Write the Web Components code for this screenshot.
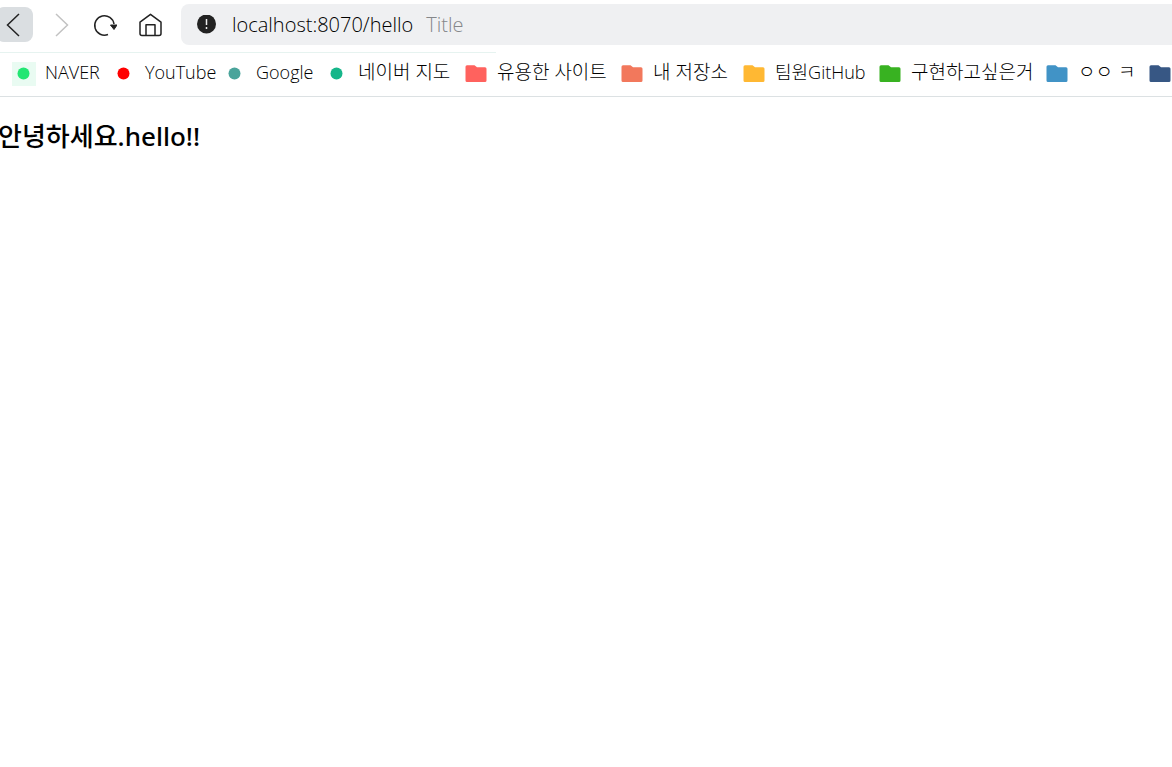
<!DOCTYPE html>
<html lang="ko">
<head>
<meta charset="utf-8">
<title>Title</title>
<style>
body { margin: 0; background: #fff; color: #000; font-family: "Open Sans", "Noto Sans CJK KR", sans-serif; }
</style>
</head>
<body>
<browser-toolbar></browser-toolbar>
<bookmarks-bar>
  <bookmark-link kind="site" tint="#23e673" class="tile">NAVER</bookmark-link>
  <bookmark-link kind="site" tint="#ff0000">YouTube</bookmark-link>
  <bookmark-link kind="site" tint="#4aa49b">Google</bookmark-link>
  <bookmark-link kind="site" tint="#16b68a" class="hangul">네이버 지도</bookmark-link>
  <bookmark-link kind="folder" tint="#ff625e" class="hangul">유용한 사이트</bookmark-link>
  <bookmark-link kind="folder" tint="#f2785c" class="hangul">내 저장소</bookmark-link>
  <bookmark-link kind="folder" tint="#ffb833">팀원GitHub</bookmark-link>
  <bookmark-link kind="folder" tint="#38b221" class="hangul">구현하고싶은거</bookmark-link>
  <bookmark-link kind="folder" tint="#4193c6" class="hangul">ㅇㅇ ㅋ</bookmark-link>
  <bookmark-link kind="folder" tint="#375784"></bookmark-link>
</bookmarks-bar>
<hello-page>안녕하세요.hello!!</hello-page>

<script>
class BrowserToolbar extends HTMLElement {
  constructor() {
    super();
    this.attachShadow({ mode: "open" }).innerHTML = `
      <style>
        :host { display: flex; align-items: center; box-sizing: border-box; height: 52px; padding: 4px 0 7px; overflow: hidden; }
        nav { display: flex; align-items: center; flex: none; gap: 8px; margin-left: -4px; }
        button { display: grid; place-items: center; width: 37px; height: 35px; padding: 0; border: 0; border-radius: 8px; background: none; }
        .back { background: #dadee1; }
        svg { display: block; fill: none; stroke: #222; stroke-width: 1.5; }
        form { display: flex; align-items: center; flex: 1; height: 41px; margin-left: 13px; padding-left: 15px; border-radius: 8px 0 0 8px; background: #eff0f2; font-size: 20px; font-weight: 300; }
        form svg { flex: none; margin-right: 16px; }
        input { field-sizing: content; padding: 0; border: 0; outline: 0; background: none; color: #000; font: inherit; }
        span { margin-left: 13px; color: #85878a; }
      </style>
      <nav aria-label="탐색">
        <button class="back" aria-label="뒤로"><svg width="24" height="24"><path d="M16 1 4.500 12 16 23"/></svg></button>
        <button aria-label="앞으로"><svg width="24" height="24" style="stroke:#c2c2c2"><path d="m8 1 11.500 11L8 23"/></svg></button>
        <button aria-label="새로고침"><svg width="24" height="24"><path d="M15 21.500A9.700 9.700 0 1 1 21 11"/><path d="m17.500 12 3.500 4.500 3-4.500z" fill="#222" stroke-linejoin="round" stroke-width="1"/></svg></button>
        <button aria-label="홈"><svg width="24" height="24"><path d="M2 9.200 12.500 1.300l10.500 7.900V20.500a2 2 0 0 1-2 2h-17a2 2 0 0 1-2-2zM8 22V11.700h9V22" stroke-linejoin="round"/></svg></button>
      </nav>
      <form>
        <svg width="20" height="20"><circle cx="10.500" cy="9" r="9.500" fill="#222" stroke="none"/><path d="M10.500 4v6" stroke="#eee" stroke-width="1.500"/><path d="M10.500 12v2" stroke="#eee" stroke-width="1.500"/></svg>
        <input aria-label="주소" value="localhost:8070/hello"><span>Title</span>
      </form>`;
  }
}

class BookmarksBar extends HTMLElement {
  constructor() {
    super();
    this.attachShadow({ mode: "open" }).innerHTML = `
      <style>
        :host { display: block; box-sizing: border-box; height: 45px; border-bottom: 1px solid #dce1e3; overflow: hidden; }
        .line { width: 496px; height: 1px; background: #e6f3f0; }
        nav { display: grid; grid-template-columns: 88px 99px 90px 127px 144px 110px 124px 155px 91px 24px; align-items: center; gap: 12px; height: 42px; padding-left: 12px; }
      </style>
      <div class="line"></div>
      <nav aria-label="북마크"><slot></slot></nav>`;
  }
}

class BookmarkLink extends HTMLElement {
  constructor() {
    super();
    const tint = this.getAttribute("tint");
    const icon = this.getAttribute("kind") === "folder"
      ? `<path d="M1.500 4.700a1.500 1.500 0 0 1 1.500-1.500h7.500l2.500 2h8a1.500 1.500 0 0 1 1.500 1.500V18.500a1.500 1.500 0 0 1-1.500 1.500H3a1.500 1.500 0 0 1-1.500-1.500z"/>`
      : `<circle cx="11.500" cy="11.500" r="6"/>`;
    this.attachShadow({ mode: "open" }).innerHTML = `
      <style>
        :host { display: block; font-size: 18px; font-weight: 300; line-height: 20px; }
        :host(.hangul) { font-size: 19px; }
        a { display: flex; align-items: center; gap: 9px; color: inherit; text-decoration: none; white-space: nowrap; }
        svg { flex: none; fill: ${tint}; }
        span { padding-bottom: 4px; }
        :host(.tile) svg { background: #e9fbf2; }
      </style>
      <a href="#" ${this.textContent ? "" : 'aria-label="폴더"'}><svg width="24" height="24">${icon}</svg><span><slot></slot></span></a>`;
  }
}

class HelloPage extends HTMLElement {
  constructor() {
    super();
    this.attachShadow({ mode: "open" }).innerHTML = `
      <style>
        :host { display: block; padding-top: 19px; }
        main { margin-left: -2px; }
        h1 { margin: 0; font: 500 26px/40px "Noto Sans", "Noto Sans CJK KR", sans-serif; }
      </style>
      <main><h1><slot></slot></h1></main>`;
  }
}

customElements.define("browser-toolbar", BrowserToolbar);
customElements.define("bookmarks-bar", BookmarksBar);
customElements.define("bookmark-link", BookmarkLink);
customElements.define("hello-page", HelloPage);
</script>
</body>
</html>
